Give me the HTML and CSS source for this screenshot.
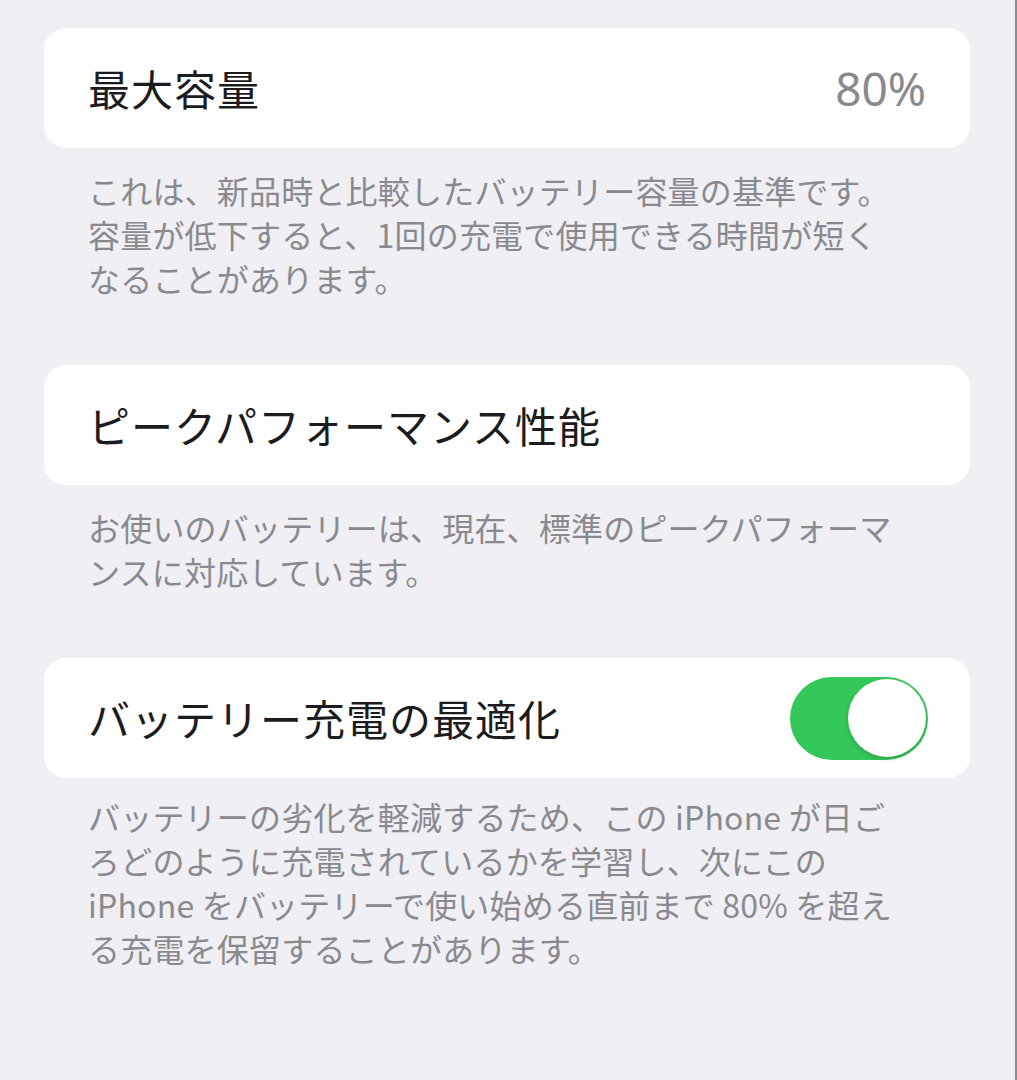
FILE: index.html
```html
<!DOCTYPE html>
<html lang="ja">
<head>
  <meta charset="UTF-8" />
  <meta name="viewport" content="width=device-width, initial-scale=1" />
  <title>バッテリーの状態と充電</title>
  <link rel="stylesheet" href="styles.css">
</head>
<body>
  <div class="page">
    <section class="group">
      <div class="cell">
        <span class="cell-title">最大容量</span>
        <span class="cell-value">80%</span>
      </div>
      <p class="footer">これは、新品時と比較したバッテリー容量の基準です。<br>容量が低下すると、1回の充電で使用できる時間が短く<br>なることがあります。</p>
    </section>

    <section class="group">
      <div class="cell">
        <span class="cell-title">ピークパフォーマンス性能</span>
      </div>
      <p class="footer">お使いのバッテリーは、現在、標準のピークパフォーマ<br>ンスに対応しています。</p>
    </section>

    <section class="group">
      <div class="cell">
        <span class="cell-title">バッテリー充電の最適化</span>
        <span class="switch on"><span class="knob"></span></span>
      </div>
      <p class="footer">バッテリーの劣化を軽減するため、この iPhone が日ご<br>ろどのように充電されているかを学習し、次にこの<br>iPhone をバッテリーで使い始める直前まで 80% を超え<br>る充電を保留することがあります。</p>
    </section>
  </div>
</body>
</html>
```

FILE: styles.css
```css
body {
  margin: 0;
  background: #efeff4;
  font-family: "Noto Sans CJK JP", "Noto Sans", sans-serif;
  color: #1c1c1e;
}
.page {
  min-height: 1080px;
  box-sizing: border-box;
  padding: 28px 45px 0 44px;
  border-right: 2px solid #8c8c90;
}
.group {
  margin-bottom: 65px;
}
.cell {
  height: 120px;
  box-sizing: border-box;
  background: #fff;
  border-radius: 22px;
  padding: 0 44px;
  display: flex;
  align-items: center;
  justify-content: space-between;
}
.cell-title {
  font-size: 42px;
  line-height: 1;
  letter-spacing: 1px;
}
.cell-value {
  font-family: "Noto Sans", sans-serif;
  font-size: 46px;
  color: #8a8a8e;
}
.footer {
  margin: 0;
  padding: 20px 44px 0;
  font-size: 32px;
  line-height: 44px;
  letter-spacing: 0.2px;
  color: #8a8a8e;
}
.group:last-child .footer {
  padding-top: 16px;
}
.switch {
  width: 138px;
  height: 83px;
  margin-right: -2px;
  border-radius: 42px;
  background: #34c759;
  display: flex;
  align-items: center;
  justify-content: flex-end;
  padding: 0 2px;
  box-sizing: border-box;
}
.knob {
  width: 78px;
  height: 78px;
  border-radius: 50%;
  background: #fff;
  box-shadow: 0 2px 4px rgba(0,0,0,0.18);
}
```
